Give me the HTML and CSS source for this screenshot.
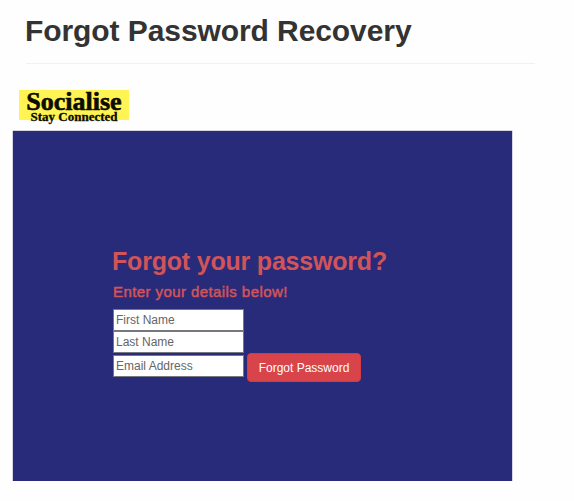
FILE: index.html
```html
<!DOCTYPE html>
<html lang="en">
<head>
<meta charset="utf-8">
<title>Forgot Password Recovery</title>
<link rel="stylesheet" href="styles.css">
</head>
<body>
<header class="page-header"><h1>Forgot Password Recovery</h1></header>
<div class="logo">
  <span class="logo-name">Socialise</span>
  <span class="logo-tag">Stay Connected</span>
</div>
<main class="panel">
  <h2>Forgot your password?</h2>
  <h4>Enter your details below!</h4>
  <form>
    <input type="text" placeholder="First Name">
    <input type="text" placeholder="Last Name">
    <div class="row">
      <input type="text" placeholder="Email Address">
      <button type="button">Forgot Password</button>
    </div>
  </form>
</main>
</body>
</html>
```
FILE: styles.css
```css
* { box-sizing: border-box; }
body {
  margin: 0;
  background: #fefefe;
  color: #333;
  font-family: "Liberation Sans", Arial, sans-serif;
}
h1, h2, h4 { margin: 0; white-space: nowrap; }
.page-header {
  width: 509px;
  height: 64px;
  margin-left: 26px;
  padding-top: 13px;
  border-bottom: 1px solid #f1f1f1;
}
h1 {
  margin-left: -1px;
  font-size: 30px;
  font-weight: 700;
  line-height: 36px;
  letter-spacing: -0.08px;
}
.logo {
  display: flex;
  flex-direction: column;
  align-items: center;
  width: 110px;
  height: 30px;
  margin: 26px 0 0 19px;
  background: #fff453;
  color: #0c0c00;
  font-family: "Liberation Serif", serif;
  font-weight: 700;
  white-space: nowrap;
}
.logo-name {
  font-size: 26px;
  line-height: 24px;
  -webkit-text-stroke: 0.6px #0c0c00;
}
.logo-tag {
  font-size: 13px;
  line-height: 13px;
  margin-top: -4px;
  -webkit-text-stroke: 0.3px #0c0c00;
}
.panel {
  width: 499px;
  height: 350px;
  margin: 11px 0 0 13px;
  padding: 115px 0 0 100px;
  background: #282b7a;
  color: #d15459;
  box-shadow: 0 0 0 0.5px #a9aacb;
}
h2 {
  margin-left: -1px;
  font-size: 25px;
  font-weight: 700;
  line-height: 30px;
  letter-spacing: -0.2px;
}
h4 {
  margin-top: 7px;
  font-size: 15px;
  font-weight: 400;
  line-height: 18px;
  letter-spacing: 0.42px;
  -webkit-text-stroke: 0.5px #d15459;
}
form {
  display: flex;
  flex-direction: column;
  margin-top: 8px;
}
input {
  display: block;
  width: 131px;
  height: 22px;
  margin: 0;
  padding: 0 2px;
  border: 1px solid #77777f;
  border-radius: 0;
  background: #fff;
  font: 12px "Liberation Sans", Arial, sans-serif;
}
input::placeholder { color: #666; opacity: 1; }
.row { display: flex; align-items: flex-start; gap: 3px; }
.row input { margin-top: 2px; }
button {
  width: 114px;
  height: 29px;
  padding: 0;
  border: 1px solid #d33c44;
  border-radius: 4px;
  background: #d8444a;
  color: #fff;
  font: 12px "Liberation Sans", Arial, sans-serif;
}
```
